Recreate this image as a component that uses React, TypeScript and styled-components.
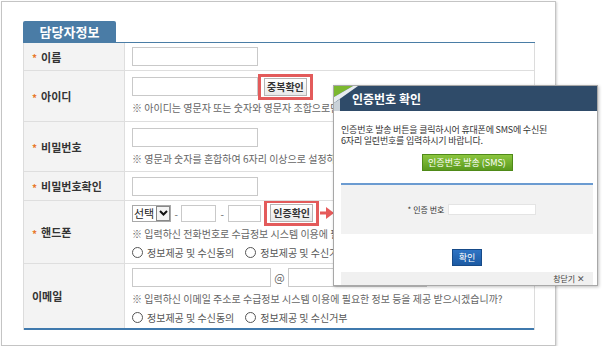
import React from "react";
import styled, { createGlobalStyle } from "styled-components";

const GlobalStyle = createGlobalStyle`
    html, body {
        margin: 0;
        padding: 0;
        background: #fff;
    }
    body {
        font-family: "Noto Sans CJK KR", "Noto Sans", sans-serif;
        color: #333;
    }
`;

function Radio({ label }: { label: string }) {
    return (
        <RadioItem>
            <RadioCircle />
            {label}
        </RadioItem>
    );
}

function Arrow() {
    return (
        <ArrowIcon width="14" height="12" viewBox="0 0 14 12">
            <rect x="0" y="4.5" width="7" height="3" fill="#e65a5a" />
            <polygon points="6,0 14,6 6,12" fill="#e65a5a" />
        </ArrowIcon>
    );
}

function App() {
    return (
        <>
            <GlobalStyle />
            <Frame>
                <TabBar>
                    <Tab>담당자정보</Tab>
                </TabBar>
                <Table>
                    <Row $height={28}>
                        <Label $required>이름</Label>
                        <Cell>
                            <Input $width={124} />
                        </Cell>
                    </Row>
                    <Row $height={51}>
                        <Label $required>아이디</Label>
                        <Cell>
                            <Line>
                                <Input $width={124} />
                                <Highlight>
                                    <GrayButton>중복확인</GrayButton>
                                </Highlight>
                            </Line>
                            <Hint>※ 아이디는 영문자 또는 숫자와 영문자 조합으로만 가능합니다.</Hint>
                        </Cell>
                    </Row>
                    <Row $height={50}>
                        <Label $required>비밀번호</Label>
                        <Cell>
                            <Input $width={124} />
                            <Hint>※ 영문과 숫자를 혼합하여 6자리 이상으로 설정하세요.</Hint>
                        </Cell>
                    </Row>
                    <Row $height={29}>
                        <Label $required>비밀번호확인</Label>
                        <Cell>
                            <Input $width={124} />
                        </Cell>
                    </Row>
                    <Row $height={63}>
                        <Label $required>핸드폰</Label>
                        <Cell>
                            <Line>
                                <Select>
                                    <SelectText>선택</SelectText>
                                    <SelectArrow>
                                        <svg width="9" height="6" viewBox="0 0 9 6">
                                            <polyline points="1,1 4.5,4.5 8,1" fill="none" stroke="#111" strokeWidth="2" />
                                        </svg>
                                    </SelectArrow>
                                </Select>
                                <Dash $width={10}>-</Dash>
                                <Input $width={33} $height={15} />
                                <Dash $width={12}>-</Dash>
                                <Input $width={31} $height={15} />
                                <Highlight $left={3}>
                                    <GrayButton>인증확인</GrayButton>
                                </Highlight>
                                <Arrow />
                            </Line>
                            <Hint>※ 입력하신 전화번호로 수급정보 시스템 이용에 필요한 정보 등을 제공 받으시겠습니까?</Hint>
                            <Line $gap={11}>
                                <Radio label="정보제공 및 수신동의" />
                                <Radio label="정보제공 및 수신거부" />
                            </Line>
                        </Cell>
                    </Row>
                    <Row $height={66} $last>
                        <Label>이메일</Label>
                        <Cell>
                            <Line>
                                <Input $width={137} />
                                <At>@</At>
                                <Input $width={137} />
                            </Line>
                            <Hint>※ 입력하신 이메일 주소로 수급정보 시스템 이용에 필요한 정보 등을 제공 받으시겠습니까?</Hint>
                            <Line $gap={11}>
                                <Radio label="정보제공 및 수신동의" />
                                <Radio label="정보제공 및 수신거부" />
                            </Line>
                        </Cell>
                    </Row>
                </Table>

                <Popup>
                    <PopupHeader>
                        <Corner width="24" height="25" viewBox="0 0 24 25">
                            <polygon points="0,0 19,0 0,11" fill="#7cb82f" />
                            <polygon points="0,11 19,0 24,0 0,17" fill="#e8ecef" />
                            <polygon points="0,17 6,13 6,25 0,25" fill="#c9d1d8" />
                        </Corner>
                        <PopupTitle>인증번호 확인</PopupTitle>
                    </PopupHeader>
                    <PopupBody>
                        <PopupText>인증번호 발송 버튼을 클릭하시어 휴대폰에 SMS에 수신된</PopupText>
                        <PopupText>6자리 일련번호를 입력하시기 바랍니다.</PopupText>
                        <Center>
                            <SendButton>인증번호 발송 (SMS)</SendButton>
                        </Center>
                        <CodeBox>
                            <CodeLabel>* 인증 번호</CodeLabel>
                            <CodeInput />
                        </CodeBox>
                        <Center>
                            <ConfirmButton>확인</ConfirmButton>
                        </Center>
                    </PopupBody>
                    <PopupFooter>
                        창닫기 <CloseMark>✕</CloseMark>
                    </PopupFooter>
                </Popup>
            </Frame>
        </>
    );
}

const Frame = styled.div`
    position: relative;
    box-sizing: border-box;
    width: 555px;
    height: 345px;
    margin: 1px 0 0 1px;
    padding: 19px 0 0 21px;
    border: 1px solid #c4c4c4;
    box-shadow: 1px 1px 2px rgba(0, 0, 0, 0.18);
`;

const TabBar = styled.div`
    width: 512px;
    display: flex;
    border-bottom: 1px solid #4a7da6;
`;

const Tab = styled.div`
    width: 93px;
    height: 21px;
    box-sizing: border-box;
    padding-top: 1px;
    background: #4a7ca6;
    color: #fff;
    font-size: 13px;
    font-weight: 700;
    text-align: center;
    line-height: 20px;
    border-radius: 2px 2px 0 0;
`;

const Table = styled.div`
    width: 512px;
    display: flex;
    flex-direction: column;
    border-left: 1px solid #dcdcdc;
    border-right: 1px solid #dcdcdc;
    box-sizing: border-box;
`;

const Row = styled.div<{ $height: number; $last?: boolean }>`
    display: grid;
    grid-template-columns: 101px 1fr;
    height: ${(p) => p.$height}px;
    box-sizing: border-box;
    border-bottom: ${(p) => (p.$last ? "2px solid #3f79ad" : "1px solid #dedede")};
`;

const Label = styled.div<{ $required?: boolean }>`
    display: flex;
    align-items: center;
    padding-left: 8px;
    background: #f3f3f3;
    border-right: 1px solid #dedede;
    font-size: 11px;
    font-weight: 700;
    color: #333;

    &::before {
        content: ${(p) => (p.$required ? '"*"' : "none")};
        color: #e8782c;
        font-size: 10px;
        margin-right: 4px;
        position: relative;
        top: 1px;
    }
`;

const Cell = styled.div`
    display: flex;
    flex-direction: column;
    justify-content: center;
    align-items: flex-start;
    gap: 4px;
    padding: 0 0 0 7px;
    overflow: hidden;
`;

const Line = styled.div<{ $gap?: number }>`
    display: flex;
    align-items: center;
    gap: ${(p) => p.$gap ?? 0}px;
    white-space: nowrap;
`;

const Input = styled.div<{ $width: number; $height?: number }>`
    width: ${(p) => p.$width}px;
    height: ${(p) => p.$height ?? 17}px;
    border: 1px solid #c9c9c9;
    background: #fff;
    flex-shrink: 0;
`;

const Highlight = styled.div<{ $left?: number }>`
    display: flex;
    margin: -4px 0 -4px ${(p) => p.$left ?? 0}px;
    padding: 1px 3px;
    border: 3px solid #e35b5b;
`;

const GrayButton = styled.div`
    height: 16px;
    padding: 0 2px;
    border: 1px solid #b5b5b5;
    background: linear-gradient(#ffffff, #e9e9e9);
    font-size: 10px;
    font-weight: 700;
    color: #333;
    line-height: 16px;
`;

const ArrowIcon = styled.svg`
    margin-left: 1px;
    display: block;
`;

const Hint = styled.div`
    font-size: 10px;
    color: #666;
    white-space: nowrap;
    line-height: 15px;
`;

const Select = styled.div`
    display: flex;
    align-items: center;
    height: 15px;
    border: 1px solid #a9a9a9;
`;

const SelectText = styled.span`
    font-size: 11px;
    color: #222;
    padding: 0 2px 0 1px;
    line-height: 15px;
`;

const SelectArrow = styled.span`
    display: flex;
    align-items: center;
    justify-content: center;
    width: 12px;
    height: 13px;
    border: 1px solid #888;
    background: #f4f4f4;
`;

const Dash = styled.span<{ $width: number }>`
    font-size: 10px;
    color: #666;
    width: ${(p) => p.$width}px;
    text-align: center;
`;

const At = styled.span`
    font-size: 11px;
    color: #666;
    width: 17px;
    text-align: center;
`;

const RadioItem = styled.label`
    display: flex;
    align-items: center;
    gap: 4px;
    font-size: 10px;
    color: #555;
`;

const RadioCircle = styled.span`
    width: 9px;
    height: 9px;
    border: 1px solid #555;
    border-radius: 50%;
    background: #fff;
`;

const Popup = styled.div`
    position: absolute;
    left: 331px;
    top: 83px;
    width: 265px;
    height: 201px;
    box-sizing: border-box;
    background: #fff;
    border: 1px solid #a8a8a8;
    box-shadow: 1px 1px 3px rgba(0, 0, 0, 0.25);
    display: flex;
    flex-direction: column;
`;

const PopupHeader = styled.div`
    display: flex;
    align-items: center;
    height: 25px;
    background: #2f4b69;
`;

const Corner = styled.svg`
    display: block;
    flex-shrink: 0;
`;

const PopupTitle = styled.span`
    margin-left: -6px;
    font-size: 12px;
    font-weight: 700;
    color: #fff;
`;

const PopupBody = styled.div`
    flex: 1;
    display: flex;
    flex-direction: column;
    padding: 13px 4px 0 7px;
`;

const PopupText = styled.div`
    font-size: 9px;
    line-height: 11px;
    height: 11px;
    color: #333;
    letter-spacing: -0.2px;
    white-space: nowrap;
`;

const Center = styled.div`
    display: flex;
    justify-content: center;
`;

const SendButton = styled.div`
    margin-top: 8px;
    width: 89px;
    height: 15px;
    background: linear-gradient(#8cc63f, #5a9a1e);
    border: 1px solid #4f8a18;
    color: #fff;
    font-size: 9px;
    line-height: 15px;
    text-align: center;
`;

const CodeBox = styled.div`
    margin-top: 12px;
    height: 51px;
    box-sizing: border-box;
    border-top: 2px solid #6b9bd1;
    background: #f2f2f2;
    display: flex;
    align-items: center;
    justify-content: center;
    gap: 4px;
`;

const CodeLabel = styled.span`
    font-size: 8px;
    color: #333;
    margin-left: 10px;
`;

const CodeInput = styled.div`
    width: 86px;
    height: 9px;
    background: #fff;
    border: 1px solid #e4e4e4;
`;

const ConfirmButton = styled.div`
    margin-top: 15px;
    width: 28px;
    height: 15px;
    background: linear-gradient(#2f74c4, #1c5aa3);
    border: 1px solid #164a88;
    color: #fff;
    font-size: 9px;
    line-height: 15px;
    text-align: center;
`;

const PopupFooter = styled.div`
    margin: 0 4px 0 7px;
    height: 13px;
    background: #f0f0f0;
    font-size: 8px;
    line-height: 13px;
    color: #444;
    text-align: right;
    padding-right: 8px;
`;

const CloseMark = styled.span`
    font-size: 9px;
    color: #555;
`;

export default App;
